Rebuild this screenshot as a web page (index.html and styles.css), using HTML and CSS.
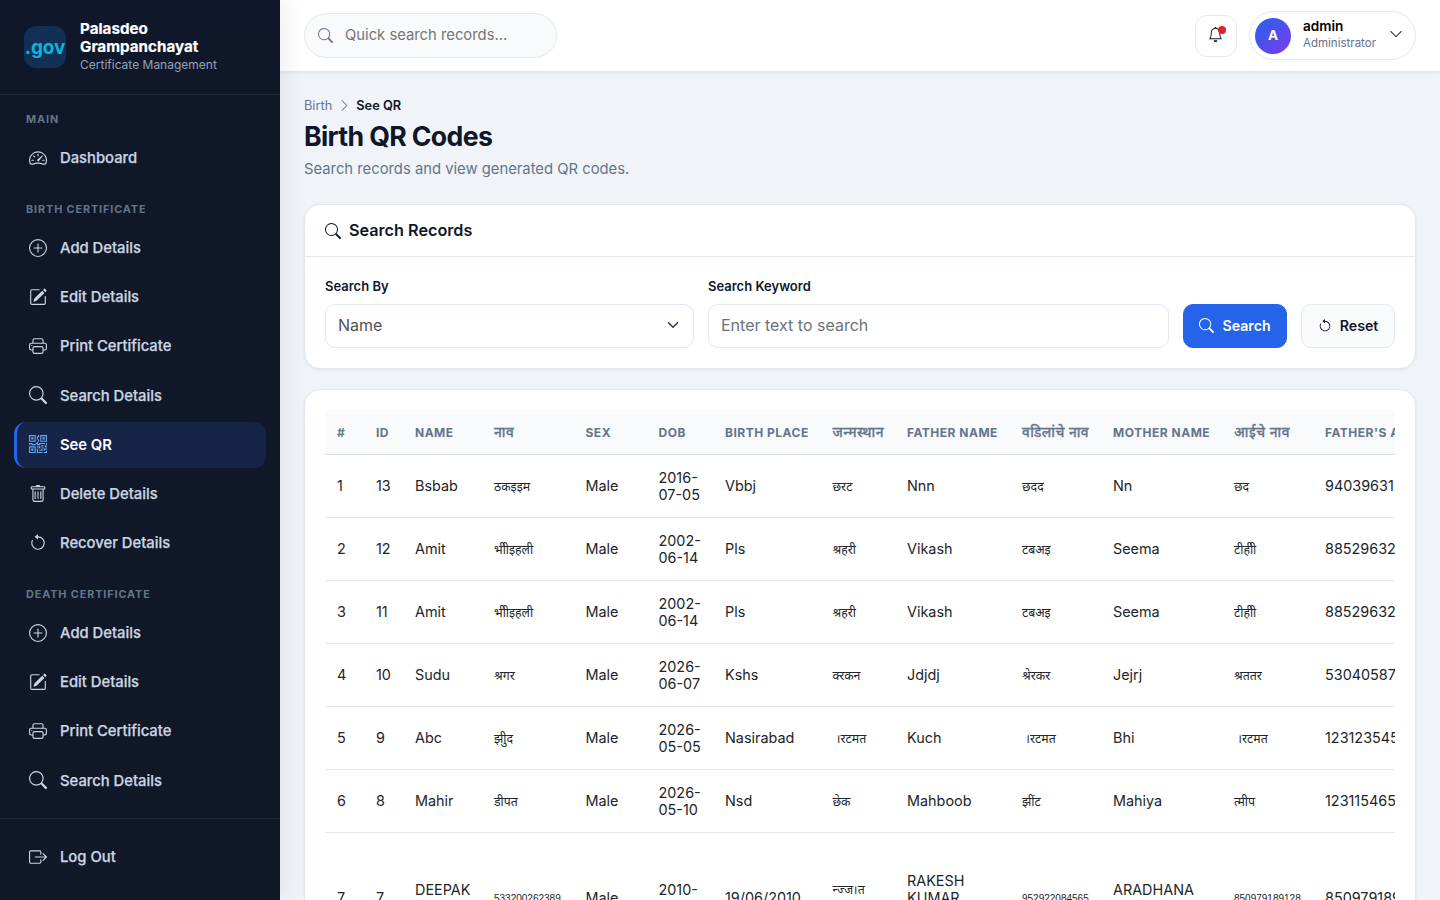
FILE: index.html
```html
<!DOCTYPE html>
<html lang="en">
<head>
<meta charset="utf-8">
<title>Birth QR Codes</title>
<link rel="stylesheet" href="styles.css">
</head>
<body>
<svg class="sprite" aria-hidden="true">
  <symbol id="search" viewBox="0 0 16 16"><path d="M11.742 10.344a6.5 6.5 0 1 0-1.397 1.398h-.001q.044.06.098.115l3.85 3.85a1 1 0 0 0 1.415-1.414l-3.85-3.85a1 1 0 0 0-.115-.1zM12 6.5a5.5 5.5 0 1 1-11 0 5.5 5.5 0 0 1 11 0"/></symbol>
  <symbol id="speed" viewBox="0 0 16 16"><path d="M8 4a.5.5 0 0 1 .5.5V6a.5.5 0 0 1-1 0V4.5A.5.5 0 0 1 8 4M3.732 5.732a.5.5 0 0 1 .707 0l.915.914a.5.5 0 1 1-.708.708l-.914-.915a.5.5 0 0 1 0-.707M2 10a.5.5 0 0 1 .5-.5h1.586a.5.5 0 0 1 0 1H2.5A.5.5 0 0 1 2 10m9.5 0a.5.5 0 0 1 .5-.5h1.5a.5.5 0 0 1 0 1H12a.5.5 0 0 1-.5-.5m.754-4.246a.39.39 0 0 0-.527-.02L7.547 9.31a.91.91 0 1 0 1.302 1.258l3.434-4.297a.39.39 0 0 0-.029-.518z"/><path fill-rule="evenodd" d="M0 10a8 8 0 1 1 15.547 2.661c-.442 1.253-1.845 1.602-2.932 1.25C11.309 13.488 9.475 13 8 13c-1.474 0-3.31.488-4.615.911-1.087.352-2.49.003-2.932-1.25A8 8 0 0 1 0 10m8-7a7 7 0 0 0-6.603 9.329c.203.575.923.876 1.68.63C4.397 12.533 6.358 12 8 12s3.604.532 4.923.96c.757.245 1.477-.056 1.68-.631A7 7 0 0 0 8 3"/></symbol>
  <symbol id="plus" viewBox="0 0 16 16"><path d="M8 15A7 7 0 1 1 8 1a7 7 0 0 1 0 14m0 1A8 8 0 1 0 8 0a8 8 0 0 0 0 16"/><path d="M8 4a.5.5 0 0 1 .5.5v3h3a.5.5 0 0 1 0 1h-3v3a.5.5 0 0 1-1 0v-3h-3a.5.5 0 0 1 0-1h3v-3A.5.5 0 0 1 8 4"/></symbol>
  <symbol id="pencil" viewBox="0 0 16 16"><path d="M15.502 1.94a.5.5 0 0 1 0 .706L14.459 3.69l-2-2L13.502.646a.5.5 0 0 1 .707 0l1.293 1.293zm-1.75 2.456-2-2L4.939 9.21a.5.5 0 0 0-.121.196l-.805 2.414a.25.25 0 0 0 .316.316l2.414-.805a.5.5 0 0 0 .196-.12l6.813-6.814z"/><path fill-rule="evenodd" d="M1 13.5A1.5 1.5 0 0 0 2.5 15h11a1.5 1.5 0 0 0 1.5-1.5v-6a.5.5 0 0 0-1 0v6a.5.5 0 0 1-.5.5h-11a.5.5 0 0 1-.5-.5v-11a.5.5 0 0 1 .5-.5H9a.5.5 0 0 0 0-1H2.5A1.5 1.5 0 0 0 1 2.5z"/></symbol>
  <symbol id="printer" viewBox="0 0 16 16"><path d="M2.5 8a.5.5 0 1 0 0-1 .5.5 0 0 0 0 1"/><path d="M5 1a2 2 0 0 0-2 2v2H2a2 2 0 0 0-2 2v3a2 2 0 0 0 2 2h1v1a2 2 0 0 0 2 2h6a2 2 0 0 0 2-2v-1h1a2 2 0 0 0 2-2V7a2 2 0 0 0-2-2h-1V3a2 2 0 0 0-2-2zM4 3a1 1 0 0 1 1-1h6a1 1 0 0 1 1 1v2H4zm1 5a2 2 0 0 0-2 2v1H2a1 1 0 0 1-1-1V7a1 1 0 0 1 1-1h12a1 1 0 0 1 1 1v3a1 1 0 0 1-1 1h-1v-1a2 2 0 0 0-2-2zm7 2v3a1 1 0 0 1-1 1H5a1 1 0 0 1-1-1v-3a1 1 0 0 1 1-1h6a1 1 0 0 1 1 1"/></symbol>
  <symbol id="qr" viewBox="0 0 16 16"><path d="M2 2h2v2H2z"/><path d="M6 0v6H0V0zM5 1H1v4h4zM4 12H2v2h2z"/><path d="M6 10v6H0v-6zm-5 1v4h4v-4zm11-9h2v2h-2z"/><path d="M10 0v6h6V0zm5 1v4h-4V1zM8 1V0h1v2H8v2H7V1zm0 5V4h1v2zM6 8V7h1V6h1v2h1V7h5v1h-4v1H7V8zm0 0v1H2V8H1v1H0V7h3v1zm10 1h-1V7h1zm-1 0h-1v2h2v-1h-1zm-4 0h2v1h-1v1h-1zm2 3v-1h-1v1h-1v1H9v1h3v-2zm0 0h3v1h-2v1h-1zm-4-1v1h1v-2H7v1z"/><path d="M7 12h1v3h4v1H7zm9 2v2h-3v-1h2v-1z"/></symbol>
  <symbol id="trash" viewBox="0 0 16 16"><path d="M5.5 5.5A.5.5 0 0 1 6 6v6a.5.5 0 0 1-1 0V6a.5.5 0 0 1 .5-.5m2.5 0a.5.5 0 0 1 .5.5v6a.5.5 0 0 1-1 0V6a.5.5 0 0 1 .5-.5m3 .5a.5.5 0 0 0-1 0v6a.5.5 0 0 0 1 0z"/><path d="M14.5 3a1 1 0 0 1-1 1H13v9a2 2 0 0 1-2 2H5a2 2 0 0 1-2-2V4h-.5a1 1 0 0 1-1-1V2a1 1 0 0 1 1-1H6a1 1 0 0 1 1-1h2a1 1 0 0 1 1 1h3.5a1 1 0 0 1 1 1zM4.118 4 4 4.059V13a1 1 0 0 0 1 1h6a1 1 0 0 0 1-1V4.059L11.882 4zM2.5 3h11V2h-11z"/></symbol>
  <symbol id="reset" viewBox="0 0 16 16"><path fill-rule="evenodd" d="M8 3a5 5 0 1 1-4.546 2.914.5.5 0 0 0-.908-.417A6 6 0 1 0 8 2z"/><path d="M8 4.466V.534a.25.25 0 0 0-.41-.192L5.23 2.308a.25.25 0 0 0 0 .384l2.36 1.966A.25.25 0 0 0 8 4.466"/></symbol>
  <symbol id="logout" viewBox="0 0 16 16"><path d="M10 12.5a.5.5 0 0 1-.5.5h-8a.5.5 0 0 1-.5-.5v-9a.5.5 0 0 1 .5-.5h8a.5.5 0 0 1 .5.5v2a.5.5 0 0 0 1 0v-2A1.5 1.5 0 0 0 9.5 2h-8A1.5 1.5 0 0 0 0 3.5v9A1.5 1.5 0 0 0 1.5 14h8a1.5 1.5 0 0 0 1.5-1.5v-2a.5.5 0 0 0-1 0z"/><path d="M15.854 8.354a.5.5 0 0 0 0-.708l-3-3a.5.5 0 0 0-.708.708L14.293 7.5H5.5a.5.5 0 0 0 0 1h8.793l-2.147 2.146a.5.5 0 0 0 .708.708z"/></symbol>
  <symbol id="bell" viewBox="0 0 16 16"><path d="M8 16a2 2 0 0 0 2-2H6a2 2 0 0 0 2 2M8 1.918l-.797.161A4 4 0 0 0 4 6c0 .628-.134 2.197-.459 3.742-.16.767-.376 1.566-.663 2.258h10.244c-.287-.692-.502-1.49-.663-2.258C12.134 8.197 12 6.628 12 6a4 4 0 0 0-3.203-3.92zM14.22 12c.223.447.481.801.78 1H1c.299-.199.557-.553.78-1C2.68 10.2 3 6.88 3 6c0-2.42 1.72-4.44 4.005-4.901a1 1 0 1 1 1.99 0A5 5 0 0 1 13 6c0 .88.32 4.2 1.22 6"/></symbol>
  <symbol id="right" viewBox="0 0 16 16"><path d="M4.646 1.646a.5.5 0 0 1 .708 0l6 6a.5.5 0 0 1 0 .708l-6 6a.5.5 0 0 1-.708-.708L10.293 8 4.646 2.354a.5.5 0 0 1 0-.708"/></symbol>
  <symbol id="down" viewBox="0 0 16 16"><path d="M1.646 4.646a.5.5 0 0 1 .708 0L8 10.293l5.646-5.647a.5.5 0 0 1 .708.708l-6 6a.5.5 0 0 1-.708 0l-6-6a.5.5 0 0 1 0-.708"/></symbol>
</svg>
<div class="app">
  <aside class="sidebar">
    <div class="brand">
      <div class="logo">.gov</div>
      <div>
        <div class="brand-name">Palasdeo<br>Grampanchayat</div>
        <div class="brand-sub">Certificate Management</div>
      </div>
    </div>
    <nav class="nav">
      <div class="label">MAIN</div>
      <a class="item"><svg class="icon"><use href="#speed"/></svg>Dashboard</a>
      <div class="label">BIRTH CERTIFICATE</div>
      <a class="item"><svg class="icon"><use href="#plus"/></svg>Add Details</a>
      <a class="item"><svg class="icon"><use href="#pencil"/></svg>Edit Details</a>
      <a class="item"><svg class="icon"><use href="#printer"/></svg>Print Certificate</a>
      <a class="item"><svg class="icon"><use href="#search"/></svg>Search Details</a>
      <a class="item active"><svg class="icon"><use href="#qr"/></svg>See QR</a>
      <a class="item"><svg class="icon"><use href="#trash"/></svg>Delete Details</a>
      <a class="item"><svg class="icon"><use href="#reset"/></svg>Recover Details</a>
      <div class="label">DEATH CERTIFICATE</div>
      <a class="item"><svg class="icon"><use href="#plus"/></svg>Add Details</a>
      <a class="item"><svg class="icon"><use href="#pencil"/></svg>Edit Details</a>
      <a class="item"><svg class="icon"><use href="#printer"/></svg>Print Certificate</a>
      <a class="item"><svg class="icon"><use href="#search"/></svg>Search Details</a>
    </nav>
    <div class="side-foot">
      <a class="item"><svg class="icon"><use href="#logout"/></svg>Log Out</a>
    </div>
  </aside>
  <div class="main">
    <header class="topbar">
      <div class="quick"><svg class="icon"><use href="#search"/></svg><span>Quick search records...</span></div>
      <div class="top-right">
        <div class="bell"><svg class="icon"><use href="#bell"/></svg><i class="dot"></i></div>
        <div class="user">
          <div class="avatar">A</div>
          <div class="who"><div class="user-name">admin</div><div class="user-role">Administrator</div></div>
          <svg class="icon"><use href="#down"/></svg>
        </div>
      </div>
    </header>
    <main class="content">
      <div class="crumbs"><span>Birth</span><svg class="icon"><use href="#right"/></svg><b>See QR</b></div>
      <h1 class="title">Birth QR Codes</h1>
      <p class="subtitle">Search records and view generated QR codes.</p>
      <section class="card">
        <div class="card-head"><svg class="icon"><use href="#search"/></svg>Search Records</div>
        <div class="form">
          <div class="field"><label>Search By</label><div class="control">Name<svg class="caret" viewBox="0 0 16 16"><path d="m2 5 6 6 6-6"/></svg></div></div>
          <div class="field"><label>Search Keyword</label><div class="control hint">Enter text to search</div></div>
          <div class="btn primary"><svg class="icon"><use href="#search"/></svg>Search</div>
          <div class="btn"><svg class="icon"><use href="#reset"/></svg>Reset</div>
        </div>
      </section>
      <section class="card table-card">
        <div class="table-wrap">
          <table class="records">
            <colgroup><col class="c39"><col class="c39"><col class="c79"><col class="c91"><col class="c73"><col class="c66"><col class="c108"><col class="c74"><col class="c115"><col class="c91b"><col class="c121"><col class="c91b"><col class="c160"></colgroup>
            <thead><tr><th>#</th><th>ID</th><th>NAME</th><th class="dev">नाव</th><th>SEX</th><th>DOB</th><th>BIRTH PLACE</th><th class="dev">जन्मस्थान</th><th>FATHER NAME</th><th class="dev">वडिलांचे नाव</th><th>MOTHER NAME</th><th class="dev">आईचे नाव</th><th>FATHER'S AADHAAR</th></tr></thead>
            <tbody>
              <tr><td>1</td><td>13</td><td>Bsbab</td><td class="mr">ठकइइम</td><td>Male</td><td>2016-<br>07-05</td><td>Vbbj</td><td class="mr">छरट</td><td>Nnn</td><td class="mr">छदद</td><td>Nn</td><td class="mr">छद</td><td>94039631&nbsp;2587</td></tr>
              <tr><td>2</td><td>12</td><td>Amit</td><td class="mr">भीीइहली</td><td>Male</td><td>2002-<br>06-14</td><td>Pls</td><td class="mr">श्रहरी</td><td>Vikash</td><td class="mr">टबअइ</td><td>Seema</td><td class="mr">टीहीी</td><td>885296321478</td></tr>
              <tr><td>3</td><td>11</td><td>Amit</td><td class="mr">भीीइहली</td><td>Male</td><td>2002-<br>06-14</td><td>Pls</td><td class="mr">श्रहरी</td><td>Vikash</td><td class="mr">टबअइ</td><td>Seema</td><td class="mr">टीहीी</td><td>885296321478</td></tr>
              <tr><td>4</td><td>10</td><td>Sudu</td><td class="mr">श्रगर</td><td>Male</td><td>2026-<br>06-07</td><td>Kshs</td><td class="mr">क्&zwj;रकन</td><td>Jdjdj</td><td class="mr">श्रेरकर</td><td>Jejrj</td><td class="mr">श्रततर</td><td>530405876123</td></tr>
              <tr><td>5</td><td>9</td><td>Abc</td><td class="mr">झीुद</td><td>Male</td><td>2026-<br>05-05</td><td>Nasirabad</td><td class="mr">&nbsp;।रटमत</td><td>Kuch</td><td class="mr">&nbsp;।रटमत</td><td>Bhi</td><td class="mr">&nbsp;।रटमत</td><td>123123545678</td></tr>
              <tr><td>6</td><td>8</td><td>Mahir</td><td class="mr">डीपत</td><td>Male</td><td>2026-<br>05-10</td><td>Nsd</td><td class="mr">छेक</td><td>Mahboob</td><td class="mr">झींट</td><td>Mahiya</td><td class="mr">त्मीप</td><td>123115465789</td></tr>
              <tr class="tall"><td>7</td><td>7</td><td>DEEPAK<br>KUMAR</td><td class="mr num">533200262389</td><td>Male</td><td>2010-<br>06-19</td><td>19/06/2010</td><td class="mr">न्ज्ज।त<br>न्ज्ज</td><td>RAKESH<br>KUMAR<br>SINGH</td><td class="mr num">952922084565</td><td>ARADHANA<br>DEVI</td><td class="mr num">850979189128</td><td>850979189128</td></tr>
            </tbody>
          </table>
        </div>
      </section>
    </main>
  </div>
</div>
</body>
</html>
```
FILE: styles.css
```css
* { box-sizing: border-box; }
body { margin: 0; height: 900px; overflow: hidden; background: #f0f4f8; color: #0f172a; font-family: Inter, "Noto Sans", sans-serif; font-size: 16px; line-height: 1.5; }
.sprite { display: none; }
.icon { flex: none; width: 16px; height: 16px; fill: currentColor; }
.app { display: flex; height: 900px; overflow: hidden; }

.sidebar { flex: none; display: flex; flex-direction: column; width: 280px; height: 900px; background: linear-gradient(180deg, #0f172a, #111827); box-shadow: 4px 0 24px rgba(15, 23, 42, .08); z-index: 2; color: #cbd5e1; }
.brand { flex: none; display: flex; align-items: center; gap: 14px; height: 95px; padding: 0 24px; border-bottom: 1px solid rgba(255, 255, 255, .08); }
.logo { flex: none; width: 42px; height: 42px; border-radius: 12px; background: #122f56; color: #06b6dc; font-size: 19px; font-weight: 700; line-height: 44px; letter-spacing: -.2px; text-align: center; white-space: nowrap; }
.brand-name { color: #fff; font-size: 15.2px; font-weight: 700; line-height: 18px; -webkit-text-stroke: .2px; }
.brand-sub { padding-bottom: 1px; color: #94a3b8; font-size: 12px; line-height: 17px; }
.nav { flex: 1; min-height: 0; overflow: hidden; padding: 0 14px; }
.label { padding: 15.9px 12px 8px; color: #64748b; font-size: 10.88px; font-weight: 700; line-height: 16.8px; letter-spacing: .87px; }
.item { display: flex; align-items: center; gap: 12px; height: 45.2px; margin-bottom: 4px; padding-left: 12px; border-left: 3px solid transparent; border-radius: 12px; font-size: 14.8px; font-weight: 500; -webkit-text-stroke: .25px; }
.item .icon { width: 18px; height: 18px; margin: -1px 1px 0 0; }
.item.active { background: #162447; border-left-color: #2563eb; color: #fff; font-weight: 600; -webkit-text-stroke: 0; }
.item.active .icon { color: #60a5fa; }
.side-foot { flex: none; height: 82px; padding: 15.5px 14px; border-top: 1px solid rgba(255, 255, 255, .08); }

.main { flex: 1; min-width: 0; }
.topbar { display: flex; align-items: center; justify-content: space-between; height: 72px; padding: 0 24px; background: #fff; border-bottom: 1px solid #e2e8f0; box-shadow: 0 1px 3px rgba(15, 23, 42, .06); }
.quick { display: flex; align-items: center; gap: 12px; width: 253px; height: 45px; padding-left: 13px; border: 1px solid #e2e8f0; border-radius: 23px; background: #f8fafc; color: #757575; font-size: 14.8px; }
.quick .icon { color: #64748b; width: 15px; height: 15px; }
.top-right { display: flex; align-items: center; gap: 12px; }
.bell { position: relative; display: flex; align-items: center; justify-content: center; width: 42px; height: 42px; border: 1px solid #e2e8f0; border-radius: 12px; }
.bell .icon { width: 15px; height: 15px; margin: -3px 0 0 -1px; }
.dot { position: absolute; top: 10px; right: 10px; width: 8px; height: 8px; border-radius: 50%; background: #dc2626; }
.user { display: flex; align-items: center; width: 167px; height: 49px; padding: 0 12px 0 5px; border: 1px solid #e2e8f0; border-radius: 25px; }
.avatar { width: 36px; height: 36px; border-radius: 50%; background: linear-gradient(135deg, #2563eb, #7c3aed); color: #fff; font-size: 13.6px; font-weight: 700; line-height: 35px; text-align: center; }
.who { flex: 1; margin: -3px 0 0 12px; }
.user-name { color: #000; font-size: 13.6px; font-weight: 600; line-height: 17px; }
.user-role { color: #64748b; font-size: 11.52px; line-height: 16px; }
.user .icon { width: 14px; height: 14px; margin-top: -3px; color: #212529; }

.content { padding: 24px; }
.crumbs { display: flex; align-items: center; gap: 5.5px; height: 20px; color: #64748b; font-size: 12.8px; }
.crumbs .icon { width: 13px; height: 13px; margin-top: -1px; }
.crumbs b { color: #0f172a; font-size: 12.8px; font-weight: 600; }
.title { margin: 2px 0 0; font-size: 26.7px; font-weight: 700; line-height: 36px; letter-spacing: -.65px; }
.subtitle { margin: 4px 0 0; height: 46px; color: #64748b; font-size: 14.8px; line-height: 23px; }
.card { height: 165px; border: 1px solid #e2e8f0; border-radius: 16px; background: #fff; box-shadow: 0 1px 3px rgba(15, 23, 42, .07); }
.card-head { display: flex; align-items: center; gap: 8px; height: 52px; padding: 0 20px; border-bottom: 1px solid #e2e8f0; font-size: 16.2px; font-weight: 600; }
.form { display: grid; grid-template-columns: 369px 461px 104px 94px; column-gap: 14px; align-items: end; padding: 20px; }
.field label { display: block; margin-bottom: 8px; font-size: 13px; font-weight: 600; line-height: 19px; }
.control { display: flex; align-items: center; justify-content: space-between; height: 44px; padding: 0 12px 2px; border: 1px solid #e2e8f0; border-radius: 10px; color: #4f5358; font-size: 16px; }
.hint { color: #6c7278; }
.caret { width: 16px; height: 12px; fill: none; stroke: #343a40; stroke-width: 2; stroke-linecap: round; stroke-linejoin: round; }
.btn { display: flex; align-items: center; justify-content: center; gap: 8px; height: 44px; border: 1px solid #e2e8f0; border-radius: 10px; background: #f8fafc; font-size: 14.2px; font-weight: 600; }
.btn .icon { width: 14px; height: 14px; margin-top: -1px; }
.primary { background: #2563eb; border-color: #2563eb; color: #fff; }
.primary .icon { width: 15px; height: 15px; }

.table-card { height: 700px; margin-top: 20px; padding: 20px; }
.table-wrap { overflow: hidden; }
.records { width: 1148px; border-collapse: separate; border-spacing: 0; table-layout: fixed; }
.c39 { width: 39px; } .c79 { width: 79px; } .c91 { width: 91.5px; } .c73 { width: 73px; } .c66 { width: 66.5px; } .c108 { width: 107.5px; } .c74 { width: 74.5px; } .c115 { width: 115px; } .c91b { width: 91px; } .c121 { width: 121px; } .c160 { width: 160px; }
th { height: 45px; padding: 1px 12px 0; background: #f8fafc; border-bottom: 1px solid #d8dee4; color: #64748b; font-size: 12px; font-weight: 700; letter-spacing: .5px; line-height: 18px; text-align: left; white-space: nowrap; }
.dev { padding-top: 0; padding-bottom: 1px; font-size: 13.6px; font-weight: 500; -webkit-text-stroke: .3px; }
td { height: 63px; padding: 0 12px 1px; border-bottom: 1px solid #e2e5e9; color: #212529; font-size: 14.4px; line-height: 17px; white-space: nowrap; }
.mr { padding-top: 2px; padding-bottom: 0; font-family: "Liberation Sans", "Noto Sans", sans-serif; font-size: 12.3px; }
.num { padding-top: 0; font-size: 10px; }
.tall td { height: 131px; }
```
